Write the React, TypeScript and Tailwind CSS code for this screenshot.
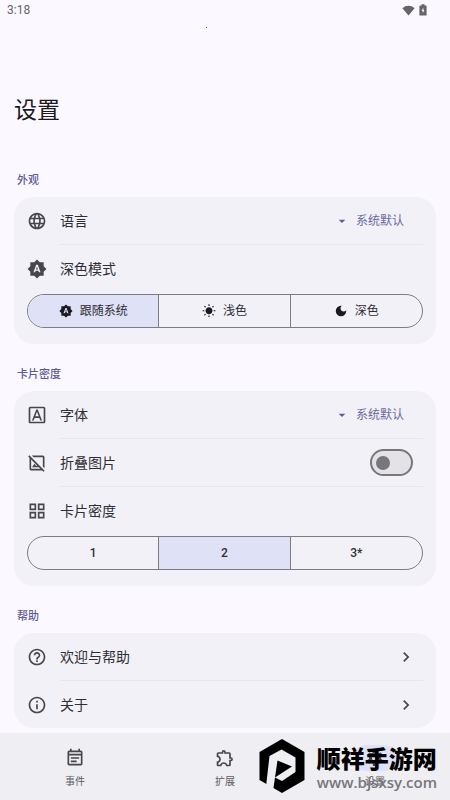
import { Fragment, useState } from "react";
import type { ReactNode } from "react";
import type { IconType } from "react-icons";
import {
  MdArrowDropDown,
  MdBrightnessAuto,
  MdChevronRight,
  MdDarkMode,
  MdHelpOutline,
  MdInfoOutline,
  MdLanguage,
  MdOutlineEventNote,
  MdOutlineExtension,
  MdOutlineFontDownload,
  MdOutlineGridView,
  MdOutlineHideImage,
  MdSettings,
  MdWbSunny,
} from "react-icons/md";

function StatusBar() {
  return (
    <header className="relative flex h-5 items-center justify-between pl-[7px] pr-[23px] text-[#65646a]">
      <span className="text-xs">3:18</span>
      <div className="flex items-center gap-1">
        <svg className="h-[11px] w-[13px]" viewBox="0 0 13 11" fill="currentColor" aria-hidden="true">
          <path d="M6.500 10.600 0.400 3.200C2.200 1.500 4.200 0.700 6.500 0.700s4.300 0.800 6.100 2.500z" />
        </svg>
        <svg className="h-3 w-2" viewBox="0 0 8 12" aria-hidden="true">
          <path fill="currentColor" d="M2.500 0.300h3v1.200H7a.6.6 0 0 1 .6.6v8.900a.6.6 0 0 1-.6.6H1a.6.6 0 0 1-.6-.6V2.100a.6.6 0 0 1 .6-.6h1.500z" />
          <path fill="#fbf9ff" d="M4.400 3.600 2.600 7h1.100v2.300L5.400 6H4.400z" />
        </svg>
      </div>
      <span className="absolute left-[206px] top-[27px] h-px w-px bg-[#d0213f]" />
    </header>
  );
}

function Section({ title, children }: { title: string; children: ReactNode }) {
  return (
    <section>
      <h2 className="px-[3px] text-[11px] font-medium leading-4 text-[#5d5b96]">{title}</h2>
      <div className="mt-2 rounded-[20px] bg-[#f3f1f8] px-[13px]">{children}</div>
    </section>
  );
}

function RowHead({ icon: Icon, text }: { icon: IconType; text: string }) {
  return (
    <>
      <Icon className="size-5 shrink-0 text-[#47464b]" aria-hidden="true" />
      <span className="ml-[13px] grow text-sm text-[#2f2e34]">{text}</span>
    </>
  );
}

function Divider() {
  return <div className="ml-[33px] h-px bg-[#e8e6ed]" />;
}

function SelectRow({ icon, text }: { icon: IconType; text: string }) {
  return (
    <label className="flex h-[47px] items-center pr-[18px]">
      <RowHead icon={icon} text={text} />
      <MdArrowDropDown className="mr-[6px] size-4 text-[#5a5c9e]" aria-hidden="true" />
      <select className="appearance-none bg-transparent text-xs text-[#6a6aa2] outline-none">
        <option>系统默认</option>
      </select>
    </label>
  );
}

function LinkRow({ icon, text }: { icon: IconType; text: string }) {
  return (
    <a href="#" className="flex h-[47px] items-center pr-[7px]">
      <RowHead icon={icon} text={text} />
      <MdChevronRight className="size-5 text-[#47464b]" aria-hidden="true" />
    </a>
  );
}

function SwitchRow({ icon, text }: { icon: IconType; text: string }) {
  return (
    <label className="flex h-[47px] items-center pr-[10px]">
      <RowHead icon={icon} text={text} />
      <input
        type="checkbox"
        role="switch"
        className="flex h-[27px] w-[43px] appearance-none items-center rounded-full border-2 border-[#77767b] bg-[#e4e2e7] px-1 before:size-[14px] before:rounded-full before:bg-[#77767b] checked:justify-end checked:bg-[#dfe1f6]"
      />
    </label>
  );
}

type Choice = { text: string; icon?: IconType };

function Segmented({ name, label, choices, initial }: { name: string; label: string; choices: Choice[]; initial: number }) {
  const [value, setValue] = useState(initial);
  return (
    <div className="pb-4 pt-0.5">
      <div
        role="radiogroup"
        aria-label={label}
        className="grid h-[34px] grid-cols-3 divide-x divide-[#7d7c83] overflow-hidden rounded-full border border-[#7d7c83]"
      >
        {choices.map(({ text, icon: Icon }, i) => (
          <label
            key={text}
            className="flex items-center justify-center gap-[7px] text-xs text-[#2f2e34] has-checked:bg-[#dfe1f6]"
          >
            <input
              type="radio"
              name={name}
              checked={value === i}
              onChange={() => setValue(i)}
              className="sr-only"
            />
            {Icon && <Icon className="size-[14px] text-[#1b1a22]" aria-hidden="true" />}
            <span className={Icon ? "font-normal" : "font-medium"}>{text}</span>
          </label>
        ))}
      </div>
    </div>
  );
}

const tabs: { text: string; icon: IconType }[] = [
  { text: "事件", icon: MdOutlineEventNote },
  { text: "扩展", icon: MdOutlineExtension },
  { text: "设置", icon: MdSettings },
];

function BottomNav() {
  return (
    <nav className="relative mt-auto grid h-[67px] grid-cols-3 bg-[#efeef3]">
      {tabs.map(({ text, icon: Icon }, i) => (
        <a key={text} href="#" className="flex flex-col items-center pt-3 text-[#47464b]">
          <span className={i === 2 ? "rounded-full bg-[#dfe1f9] px-3 py-[3px]" : "px-3 py-[3px]"}>
            <Icon className="size-5" aria-hidden="true" />
          </span>
          <span className="text-[10px] leading-[22px] text-[#5c5b60]">{text}</span>
        </a>
      ))}
      <Watermark />
    </nav>
  );
}

function Watermark() {
  return (
    <div className="pointer-events-none absolute right-[13px] top-[6px] flex items-center gap-3">
      <svg className="h-[54px] w-[46px]" viewBox="0 0 46 54" aria-hidden="true">
        <path d="M23 0 45.500 13v28L23 54 0.500 41V13z" fill="#000" />
        <path
          d="M10.500 17 22.500 10.500 36.500 18.500v14.500L23 42l-7-3.500L14 52l-7-4.500z"
          fill="#efeef3"
        />
        <path d="M18.500 21.500 33 27.500 16 38.500z" fill="#000" />
      </svg>
      <div className="flex flex-col pt-1">
        <span className="text-2xl font-black leading-7 text-black">顺祥手游网</span>
        <span className="font-['Open_Sans',sans-serif] text-[15px] font-semibold leading-4 text-[#77767b]">www.bjsxsy.com</span>
      </div>
    </div>
  );
}

export default function App() {
  return (
    <div className="flex min-h-screen flex-col bg-[#fbf9ff] font-[Roboto,'Noto_Sans_CJK_SC',sans-serif]">
      <StatusBar />
      <main className="px-[14px] pb-[5px]">
        <h1 className="pt-[75px] text-[23px] leading-8 text-[#1b1b1f]">设置</h1>
        <div className="flex flex-col gap-[23px] pt-[46px]">
          <Section title="外观">
            <SelectRow icon={MdLanguage} text="语言" />
            <Divider />
            <div className="flex h-[47px] items-center">
              <RowHead icon={MdBrightnessAuto} text="深色模式" />
            </div>
            <Segmented
              name="theme"
              label="深色模式"
              initial={0}
              choices={[
                { text: "跟随系统", icon: MdBrightnessAuto },
                { text: "浅色", icon: MdWbSunny },
                { text: "深色", icon: MdDarkMode },
              ]}
            />
          </Section>
          <Section title="卡片密度">
            <SelectRow icon={MdOutlineFontDownload} text="字体" />
            <Divider />
            <SwitchRow icon={MdOutlineHideImage} text="折叠图片" />
            <Divider />
            <div className="flex h-[47px] items-center">
              <RowHead icon={MdOutlineGridView} text="卡片密度" />
            </div>
            <Segmented
              name="density"
              label="卡片密度"
              initial={1}
              choices={[{ text: "1" }, { text: "2" }, { text: "3*" }]}
            />
          </Section>
          <Section title="帮助">
            {[
              { icon: MdHelpOutline, text: "欢迎与帮助" },
              { icon: MdInfoOutline, text: "关于" },
            ].map((row, i) => (
              <Fragment key={row.text}>
                {i > 0 && <Divider />}
                <LinkRow icon={row.icon} text={row.text} />
              </Fragment>
            ))}
          </Section>
        </div>
      </main>
      <BottomNav />
    </div>
  );
}
